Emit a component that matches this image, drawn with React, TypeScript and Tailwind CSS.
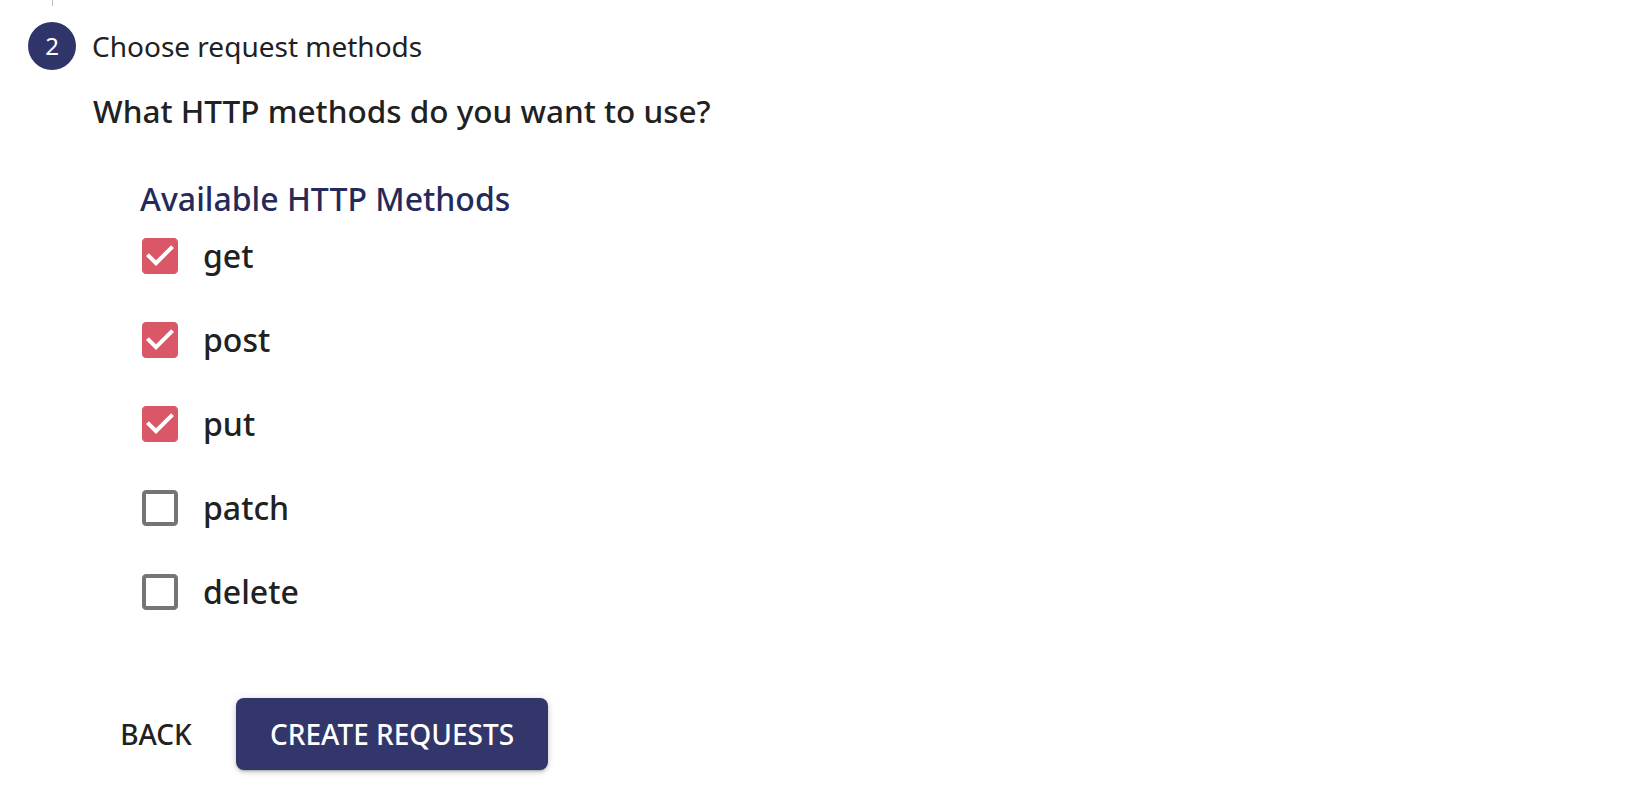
import React, { useState } from 'react';

const METHODS = ['get', 'post', 'put', 'patch', 'delete'];

const CheckedIcon = () => (
  <svg viewBox="0 0 24 24" className="w-[48px] h-[48px]" fill="#d95766">
    <path d="M19 3H5c-1.11 0-2 .9-2 2v14c0 1.1.89 2 2 2h14c1.11 0 2-.9 2-2V5c0-1.1-.89-2-2-2zm-9 14l-5-5 1.41-1.41L10 14.17l7.59-7.59L19 8l-9 9z" />
  </svg>
);

const UncheckedIcon = () => (
  <svg viewBox="0 0 24 24" className="w-[48px] h-[48px]" fill="#757575">
    <path d="M19 5v14H5V5h14m0-2H5c-1.1 0-2 .9-2 2v14c0 1.1.89 2 2 2h14c1.1 0 2-.9 2-2V5c0-1.1-.9-2-2-2z" />
  </svg>
);

const App: React.FC = () => {
  const [selected, setSelected] = useState<string[]>(['get', 'post', 'put']);

  const toggle = (m: string) => {
    setSelected((prev) => (prev.includes(m) ? prev.filter((x) => x !== m) : [...prev, m]));
  };

  return (
    <div className="w-[1640px] h-[800px] bg-white overflow-hidden font-['Noto_Sans',sans-serif] text-[#212121]">
      {/* connector from previous step */}
      <div className="ml-[52px] w-[1px] h-[6px] bg-[#bdbdbd]" />

      {/* Step header */}
      <div className="flex items-center ml-[28px] mt-[16px] h-[48px]">
        <div className="w-[48px] h-[48px] rounded-full bg-[#2f3469] text-white flex items-center justify-center text-[24px] leading-none">
          2
        </div>
        <span className="ml-[16px] text-[28px] leading-[48px]">Choose request methods</span>
      </div>

      <div className="ml-[93px]">
        {/* Question */}
        <div className="mt-[21px] h-[40px] text-[31.5px] leading-[40px] font-medium">
          What HTTP methods do you want to use?
        </div>

        {/* Method list */}
        <div className="ml-[43px] mt-[53px]">
          <div className="ml-[4px] h-[30px] text-[32px] leading-[30px] font-medium text-[#262a5a]">
            Available HTTP Methods
          </div>
          <div className="flex flex-col">
            {METHODS.map((m) => (
              <label key={m} className="flex items-center h-[84px] cursor-pointer" onClick={() => toggle(m)}>
                {selected.includes(m) ? <CheckedIcon /> : <UncheckedIcon />}
                <span className="ml-[19px] text-[32px] font-medium leading-none">{m}</span>
              </label>
            ))}
          </div>
        </div>
      </div>

      {/* Actions */}
      <div className="flex items-center ml-[100px] mt-[64px]">
        <button className="w-[112px] h-[72px] flex items-center justify-center text-[28px] font-medium text-[#212121] rounded-[8px]">
          BACK
        </button>
        <button className="ml-[24px] w-[312px] h-[72px] flex items-center justify-center rounded-[8px] bg-[#33366b] text-white text-[28px] font-medium shadow-[0_3px_2px_-2px_rgba(0,0,0,0.2),0_2px_4px_0_rgba(0,0,0,0.14),0_1px_10px_0_rgba(0,0,0,0.12)]">
          CREATE REQUESTS
        </button>
      </div>
    </div>
  );
};

export default App;
